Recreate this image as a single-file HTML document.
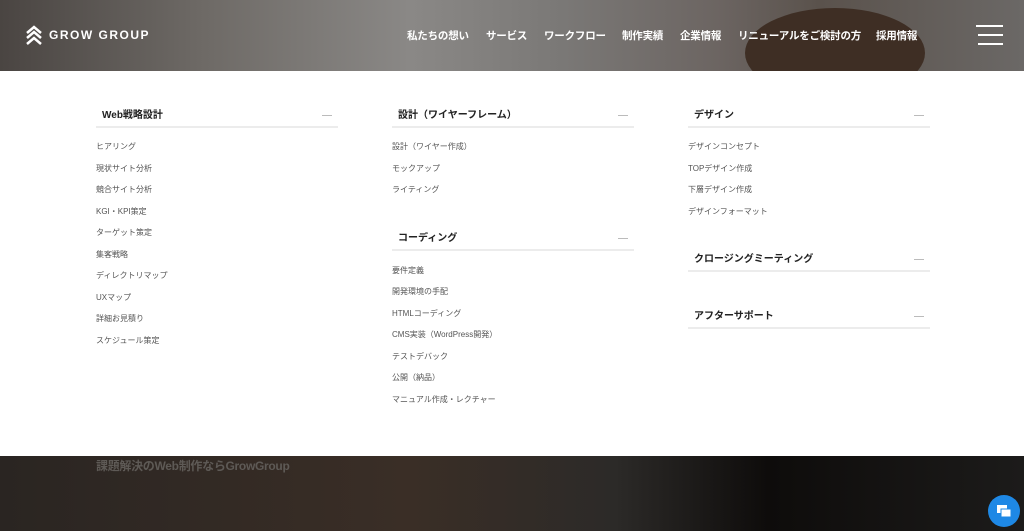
<!DOCTYPE html>
<html><head><meta charset="utf-8"><style>
*{margin:0;padding:0;box-sizing:border-box}
body{width:1024px;height:531px;overflow:hidden;position:relative;font-family:"Liberation Sans","Noto Sans CJK JP",sans-serif;background:#fff}
.hdr{position:absolute;left:0;top:0;width:1024px;height:71px;background:linear-gradient(90deg,#4a4542 0%,#6e6a66 20%,#8a8886 40%,#7a7876 55%,#6c6562 70%,#5a524c 80%,#6b6866 100%)}
.head{position:absolute;left:745px;top:8px;width:180px;height:90px;border-radius:50%;background:#3e2e24}
.logo{position:absolute;left:24px;top:25px;color:#fff;font-size:12px;font-weight:bold;letter-spacing:1.5px;display:flex;align-items:center}
.logo span{margin-left:5px}
.nav{position:absolute;top:28px;color:#fff;font-size:10.5px;font-weight:bold;letter-spacing:-.2px}
.burger{position:absolute;left:976px;top:25px;width:27px}
.burger i{display:block;height:2px;background:#fff;margin-bottom:7px}
.panel{position:absolute;left:0;top:71px;width:1024px;height:385px;background:#fff}
.h{position:absolute;font-size:10px;font-weight:bold;color:#222;padding-left:6px;border-bottom:2px solid #ececec;height:22px;width:242px}
.h::after{content:"";position:absolute;right:6px;top:6px;width:10px;height:3px;border-bottom:1px solid #bbb}
.it{position:absolute;font-size:8px;color:#555;letter-spacing:0}
.bot{position:absolute;left:0;top:456px;width:1024px;height:75px;background:linear-gradient(90deg,#2a2522 0%,#3a2e26 40%,#2c2a28 60%,#0e0c0b 75%,#1c1b1a 100%)}
.tag{position:absolute;left:96px;top:457px;color:#5e5a56;font-size:12px;font-weight:bold;letter-spacing:-.3px}
.chat{position:absolute;left:988px;top:495px;width:32px;height:32px;border-radius:50%;background:#1e88e5}
</style></head><body>
<div class="hdr"></div><div class="head"></div>
<div class="logo"><svg width="20" height="20" viewBox="0 0 20 20" fill="none" stroke="#fff" stroke-width="2.5"><path d="M3 8l7-6 7 6M3 13l7-6 7 6M3 19l7-6 7 6"/></svg><span>GROW GROUP</span></div>
<div class="nav" style="left:407px">私たちの想い</div>
<div class="nav" style="left:486px">サービス</div>
<div class="nav" style="left:544px">ワークフロー</div>
<div class="nav" style="left:622px">制作実績</div>
<div class="nav" style="left:680px">企業情報</div>
<div class="nav" style="left:738px">リニューアルをご検討の方</div>
<div class="nav" style="left:876px">採用情報</div>
<div class="burger"><i></i><i style="margin-left:2px"></i><i style="width:25px;margin-left:2px"></i></div>
<div class="panel"></div>
<div class="h" style="left:96px;top:106px">Web戦略設計</div>
<div class="it" style="left:96px;top:141px">ヒアリング</div>
<div class="it" style="left:96px;top:163px">現状サイト分析</div>
<div class="it" style="left:96px;top:184px">競合サイト分析</div>
<div class="it" style="left:96px;top:206px">KGI・KPI策定</div>
<div class="it" style="left:96px;top:227px">ターゲット策定</div>
<div class="it" style="left:96px;top:249px">集客戦略</div>
<div class="it" style="left:96px;top:270px">ディレクトリマップ</div>
<div class="it" style="left:96px;top:292px">UXマップ</div>
<div class="it" style="left:96px;top:313px">詳細お見積り</div>
<div class="it" style="left:96px;top:335px">スケジュール策定</div>
<div class="h" style="left:392px;top:106px">設計（ワイヤーフレーム）</div>
<div class="it" style="left:392px;top:141px">設計（ワイヤー作成）</div>
<div class="it" style="left:392px;top:163px">モックアップ</div>
<div class="it" style="left:392px;top:184px">ライティング</div>
<div class="h" style="left:392px;top:229px">コーディング</div>
<div class="it" style="left:392px;top:265px">要件定義</div>
<div class="it" style="left:392px;top:286px">開発環境の手配</div>
<div class="it" style="left:392px;top:308px">HTMLコーディング</div>
<div class="it" style="left:392px;top:329px">CMS実装（WordPress開発）</div>
<div class="it" style="left:392px;top:351px">テストデバック</div>
<div class="it" style="left:392px;top:372px">公開（納品）</div>
<div class="it" style="left:392px;top:394px">マニュアル作成・レクチャー</div>
<div class="h" style="left:688px;top:106px">デザイン</div>
<div class="it" style="left:688px;top:141px">デザインコンセプト</div>
<div class="it" style="left:688px;top:163px">TOPデザイン作成</div>
<div class="it" style="left:688px;top:184px">下層デザイン作成</div>
<div class="it" style="left:688px;top:206px">デザインフォーマット</div>
<div class="h" style="left:688px;top:250px">クロージングミーティング</div>
<div class="h" style="left:688px;top:307px">アフターサポート</div>
<div class="bot"></div>
<div class="tag">課題解決のWeb制作ならGrowGroup</div>
<div class="chat"><svg width="32" height="32" viewBox="0 0 32 32"><rect x="9" y="10" width="10" height="8" fill="#fff"/><rect x="13" y="14" width="10" height="8" fill="#fff" stroke="#1e88e5"/></svg></div>
</body></html>
